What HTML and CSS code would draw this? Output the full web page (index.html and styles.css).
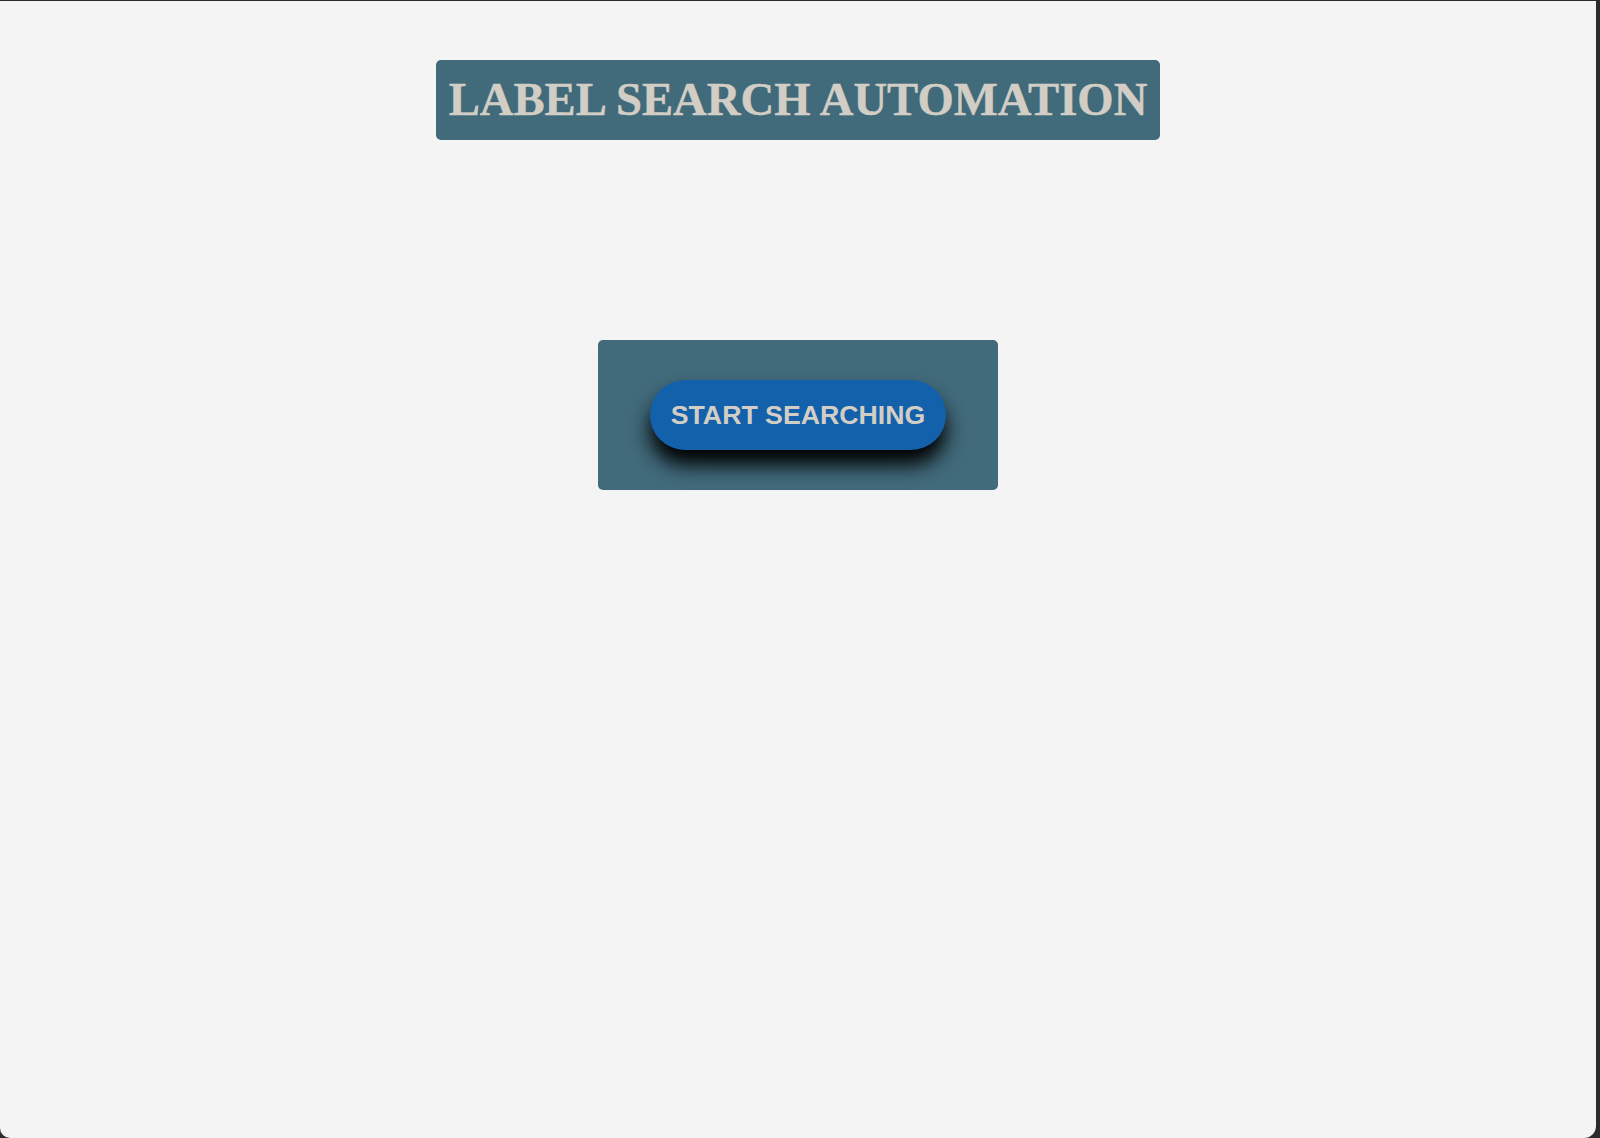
FILE: index.html
```html
<!DOCTYPE html>
<html lang="en">
<head>
<meta charset="utf-8">
<title>Label Search Automation</title>
<link rel="stylesheet" href="styles.css">
</head>
<body>
<div class="window">
  <header class="title-wrap">
    <h1 class="title">LABEL SEARCH AUTOMATION</h1>
  </header>
  <main class="panel">
    <button class="start-btn" type="button">START SEARCHING</button>
  </main>
</div>
</body>
</html>
```

FILE: styles.css
```css
html {
  background: #2b2b2b;
  height: 100%;
}

body {
  margin: 0;
  height: 100%;
  overflow: hidden;
}

.window {
  box-sizing: border-box;
  width: 1596px;
  height: 1137px;
  margin-top: 1px;
  background: #f4f4f4;
  border-radius: 0 0 12px 10px;
  display: flex;
  flex-direction: column;
  align-items: center;
  padding-top: 59px;
}

.title-wrap {
  display: flex;
  justify-content: center;
}

.title {
  margin: 0;
  box-sizing: border-box;
  width: 724px;
  height: 80px;
  padding-top: 13px;
  text-align: center;
  background: #416a7b;
  border-radius: 5px;
  color: #d3cec5;
  font-family: "Liberation Serif", "Times New Roman", serif;
  font-weight: bold;
  font-size: 46.7px;
  line-height: 53px;
  white-space: nowrap;
  -webkit-text-stroke: 0.4px #d3cec5;
}

.panel {
  box-sizing: border-box;
  margin-top: 200px;
  width: 400px;
  height: 150px;
  background: #416a7b;
  border-radius: 5px;
  display: flex;
  justify-content: center;
  padding-top: 40px;
}

.start-btn {
  box-sizing: border-box;
  width: 296px;
  height: 70px;
  border: none;
  border-radius: 35px;
  background: #1360ab;
  color: #d3cec5;
  font-family: "Liberation Sans", Arial, sans-serif;
  font-weight: bold;
  font-size: 26.7px;
  line-height: 30px;
  padding: 0;
  box-shadow: 0 15px 20px #000;
  cursor: pointer;
}
```
